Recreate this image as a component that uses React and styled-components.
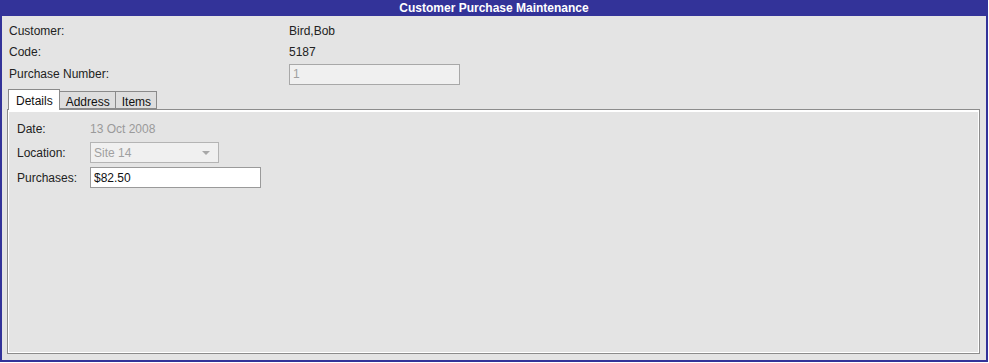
import React, { useState } from 'react';
import styled, { createGlobalStyle } from 'styled-components';

const GlobalStyle = createGlobalStyle`
  html, body {
    margin: 0;
    padding: 0;
    background: #ffffff;
  }
  * {
    box-sizing: border-box;
  }
`;

const Frame = styled.div`
  width: 988px;
  height: 362px;
  border: 2px solid #333399;
  border-top: none;
  background: #e4e4e4;
  font-family: "Liberation Sans", Arial, sans-serif;
  font-size: 12px;
  color: #222;
  display: flex;
  flex-direction: column;
`;

const TitleBar = styled.div`
  height: 16px;
  margin: 0 -2px;
  background: #333399;
  color: #fff;
  font-weight: bold;
  text-align: center;
  line-height: 16px;
`;

const HeaderGrid = styled.div`
  display: grid;
  grid-template-columns: 280px 172px;
  grid-template-rows: 20px 20px 22px;
  row-gap: 1px;
  align-items: center;
  padding: 5px 0 0 7px;
`;

const Label = styled.span`
  color: #222;
`;

const Value = styled.span`
  color: ${(p) => (p.$muted ? '#9a9a9a' : '#222')};
`;

const TextBox = styled.input`
  width: ${(p) => p.$width}px;
  height: 21px;
  padding: 0 3px;
  border: 1px solid ${(p) => (p.disabled ? '#a8a8a8' : '#9a9a9a')};
  background: ${(p) => (p.disabled ? '#f0f0f0' : '#ffffff')};
  color: ${(p) => (p.disabled ? '#a0a0a0' : '#111')};
  font-family: inherit;
  font-size: 12px;
  outline: none;
`;

const TabArea = styled.div`
  flex: 1;
  display: flex;
  flex-direction: column;
  padding: 4px 6px 6px 5px;
`;

const TabStrip = styled.div`
  display: flex;
  align-items: flex-end;
  height: 20px;
  padding-left: 1px;
  position: relative;
  z-index: 1;
`;

const Tab = styled.button`
  font-family: inherit;
  font-size: 12px;
  color: #111;
  padding: ${(p) => (p.$active ? '1px 6px 0 7px' : '2px 5px 0 6px')};
  height: ${(p) => (p.$active ? 21 : 18)}px;
  margin-bottom: ${(p) => (p.$active ? -1 : 0)}px;
  background: ${(p) => (p.$active ? '#ffffff' : '#dedede')};
  border: 1px solid #8a8a8a;
  border-bottom: ${(p) => (p.$active ? 'none' : '1px solid #8a8a8a')};
  margin-right: -1px;
  cursor: pointer;
  line-height: 16px;
`;

const Panel = styled.div`
  flex: 1;
  border: 1px solid #8c8c8c;
  box-shadow: inset 1px 2px 0 #ffffff, inset -1px -1px 0 #ffffff;
  background: #e4e4e4;
  padding: 10px 9px;
`;

const FieldGrid = styled.div`
  display: grid;
  grid-template-columns: 73px auto;
  grid-template-rows: 18px 21px 21px;
  row-gap: 4px;
  align-items: center;
  justify-content: start;
`;

const SelectBox = styled.div`
  width: 129px;
  height: 21px;
  border: 1px solid #b4b4b4;
  background: #f0f0f0;
  color: #a0a0a0;
  display: flex;
  align-items: center;
  justify-content: space-between;
  padding: 0 8px 0 3px;
`;

const Caret = styled.span`
  width: 0;
  height: 0;
  border-left: 4px solid transparent;
  border-right: 4px solid transparent;
  border-top: 4px solid #a8a8a8;
`;

export default function App() {
  const [tab, setTab] = useState('Details');
  const [purchases, setPurchases] = useState('$82.50');
  const tabs = ['Details', 'Address', 'Items'];

  return (
    <>
      <GlobalStyle />
      <Frame>
        <TitleBar>Customer Purchase Maintenance</TitleBar>
        <HeaderGrid>
          <Label>Customer:</Label>
          <Value>Bird,Bob</Value>
          <Label>Code:</Label>
          <Value>5187</Value>
          <Label>Purchase Number:</Label>
          <TextBox $width={171} value="1" disabled readOnly />
        </HeaderGrid>
        <TabArea>
          <TabStrip>
            {tabs.map((t) => (
              <Tab key={t} $active={tab === t} onClick={() => setTab(t)}>
                {t}
              </Tab>
            ))}
          </TabStrip>
          <Panel>
            {tab === 'Details' && (
              <FieldGrid>
                <Label>Date:</Label>
                <Value $muted>13 Oct 2008</Value>
                <Label>Location:</Label>
                <SelectBox>
                  <span>Site 14</span>
                  <Caret />
                </SelectBox>
                <Label>Purchases:</Label>
                <TextBox
                  $width={171}
                  value={purchases}
                  onChange={(e) => setPurchases(e.target.value)}
                />
              </FieldGrid>
            )}
          </Panel>
        </TabArea>
      </Frame>
    </>
  );
}
